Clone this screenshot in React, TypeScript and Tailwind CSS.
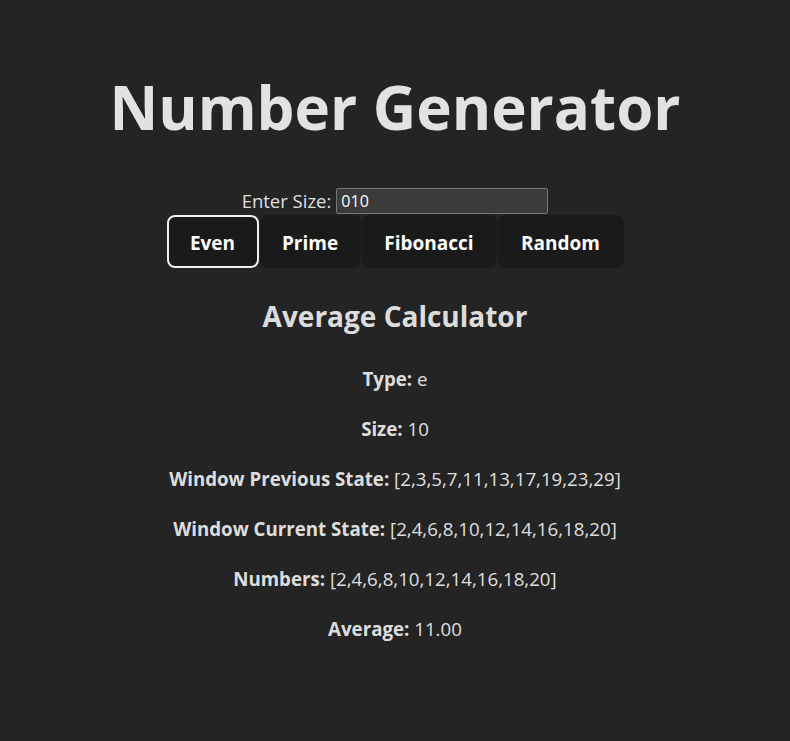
import React from 'react';

const rows = [
  { label: 'Type:', value: 'e' },
  { label: 'Size:', value: '10' },
  { label: 'Window Previous State:', value: '[2,3,5,7,11,13,17,19,23,29]' },
  { label: 'Window Current State:', value: '[2,4,6,8,10,12,14,16,18,20]' },
  { label: 'Numbers:', value: '[2,4,6,8,10,12,14,16,18,20]' },
  { label: 'Average:', value: '11.00' },
];

const buttons = [
  { name: 'Even', w: 'w-[92px]' },
  { name: 'Prime', w: 'w-[101px]' },
  { name: 'Fibonacci', w: 'w-[135px]' },
  { name: 'Random', w: 'w-[126px]' },
];

export default function App() {
  return (
    <div className="min-h-screen w-full bg-[#242424] text-[rgba(255,255,255,0.87)] font-['Open_Sans',sans-serif] flex flex-col items-center text-center pt-[74px]">
      <h1 className="text-[60px] leading-[66px] font-bold">Number Generator</h1>

      {/* size input */}
      <div className="mt-[48px] flex items-center h-[26px] text-[18.5px]">
        <label className="mr-[5px]">Enter Size:</label>
        <input
          defaultValue="010"
          className="w-[212px] h-[26px] bg-[#3b3b3b] border border-[#767676] rounded-[2px] px-[4px] text-[16px] text-white outline-none"
        />
      </div>

      {/* type buttons */}
      <div className="mt-[1px] flex gap-[1px]">
        {buttons.map((b, i) => (
          <button
            key={b.name}
            className={`${b.w} h-[53px] pt-[3px] rounded-[8px] bg-[#1a1a1a] text-white text-[19px] font-bold ${
              i === 0 ? 'border-2 border-[#f0f0f0]' : 'border-2 border-transparent'
            }`}
          >
            {b.name}
          </button>
        ))}
      </div>

      <h2 className="mt-[28px] text-[28px] leading-[40px] font-bold">Average Calculator</h2>

      <div className="mt-[28px] flex flex-col gap-[20px] text-[18.7px] leading-[30px]">
        {rows.map((r) => (
          <p key={r.label}>
            <strong className="font-bold">{r.label}</strong> {r.value}
          </p>
        ))}
      </div>
    </div>
  );
}
